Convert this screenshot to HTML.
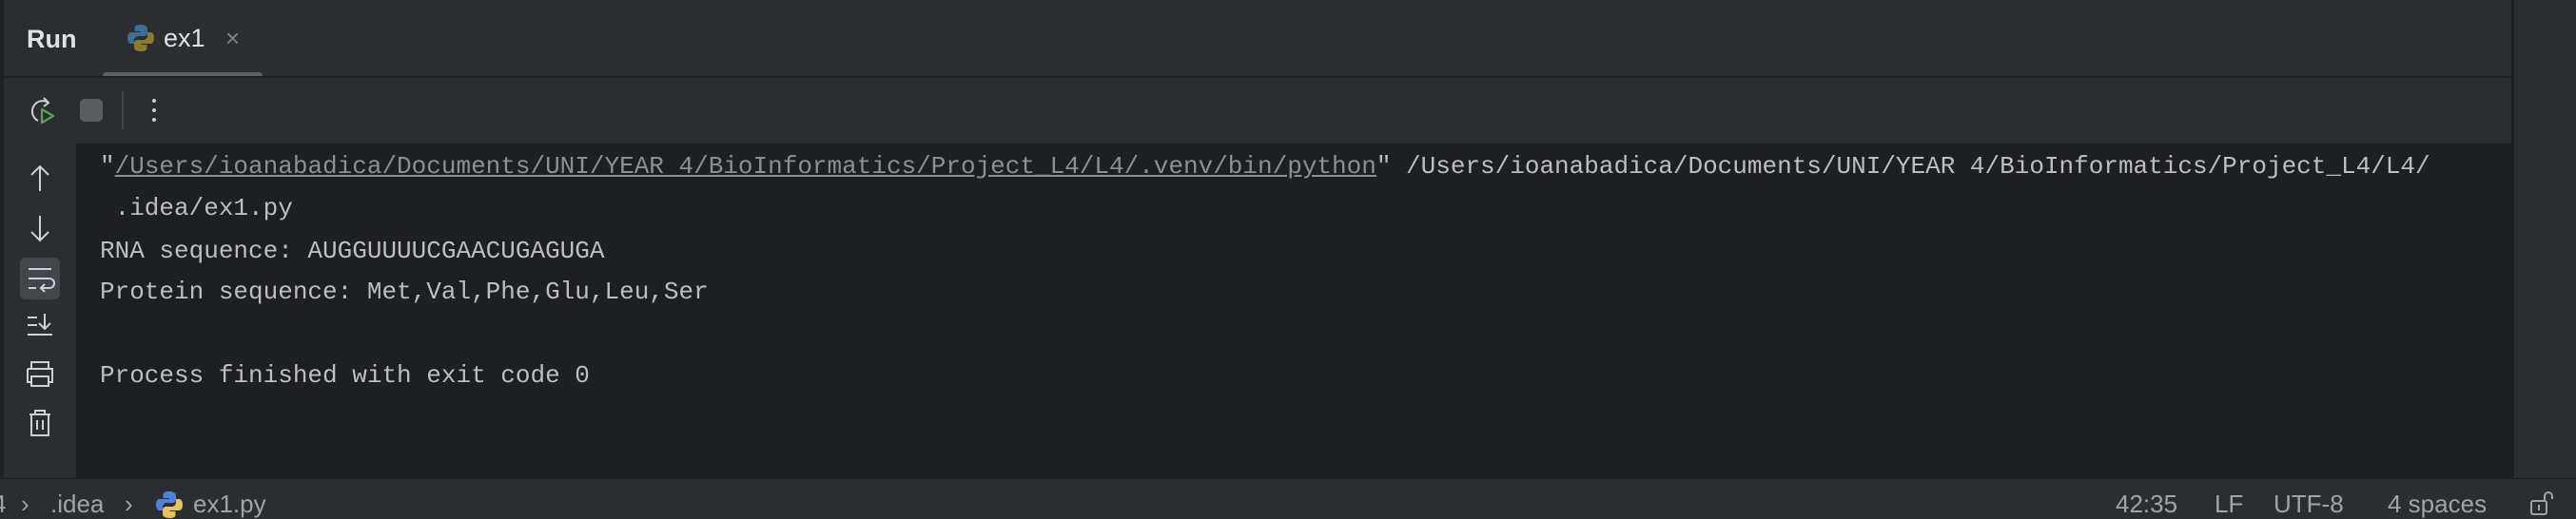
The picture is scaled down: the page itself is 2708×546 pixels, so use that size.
<!DOCTYPE html>
<html><head><meta charset="utf-8"><style>
*{margin:0;padding:0;box-sizing:border-box}
body{width:2708px;height:544px;background:#2b2d30;position:relative;overflow:hidden;font-family:"Liberation Sans",sans-serif}
.abs{position:absolute}
.mono{font-family:"Liberation Mono",monospace;font-size:26px;color:#bcbec4;white-space:pre;line-height:30px}
.sb{font-size:26px;color:#a0a3a9;line-height:30px;white-space:pre}
</style></head><body>
<div class="abs" style="left:0;top:0;width:4px;height:504px;background:#1e1f22"></div>
<div class="abs" style="left:2640px;top:0;width:3px;height:504px;background:#1e1f22"></div>
<!-- tab bar -->
<div class="abs" style="left:28px;top:24px;font-size:27px;font-weight:bold;color:#dfe1e5;line-height:34px">Run</div>
<svg class="abs" style="left:133px;top:25px" width="30" height="30" viewBox="0 0 30 30">
<path d="M14.5 1c-6 0-6 2.5-6 4v3h6v1H5C2 9 1 12 1 15s1 6 4 6h3v-3.5c0-2.5 2-4.5 4.5-4.5h6c2 0 3.5-1.5 3.5-3.5V5c0-2-2-4-7.5-4z" fill="#3e6e93"/>
<path d="M15.5 29c6 0 6-2.5 6-4v-3h-6v-1H25c3 0 4-3 4-6s-1-6-4-6h-3v3.5c0 2.5-2 4.5-4.5 4.5h-6C9.5 17 8 18.5 8 20.5V25c0 2 2 4 7.5 4z" fill="#8c7a2e"/>
</svg>
<div class="abs" style="left:172px;top:23px;font-size:27px;color:#dfe1e5;line-height:34px">ex1</div>
<div class="abs" style="left:237px;top:23px;font-size:26px;color:#7f8288;line-height:34px">×</div>
<div class="abs" style="left:108px;top:76px;width:168px;height:6px;border-radius:3px;background:#5a5d63"></div>
<div class="abs" style="left:4px;top:80px;width:2636px;height:2px;background:#1e1f22"></div>
<!-- toolbar -->
<svg class="abs" style="left:28px;top:100px" width="34" height="34" viewBox="0 0 34 34">
<path d="M23 8A11 11 0 1 0 12 27" fill="none" stroke="#ced0d6" stroke-width="2"/>
<path d="M18 3l5 5-5 4" fill="none" stroke="#ced0d6" stroke-width="2"/>
<path d="M16 15l12 7-12 7z" fill="none" stroke="#5fa05a" stroke-width="2.2" stroke-linejoin="round"/>
</svg>
<div class="abs" style="left:84px;top:104px;width:24px;height:24px;border-radius:5px;background:#5a5b5e"></div>
<div class="abs" style="left:128px;top:96px;width:2px;height:40px;background:#43454a"></div>
<div class="abs" style="left:160px;top:104px;width:4px;height:4px;border-radius:2px;background:#ced0d6"></div>
<div class="abs" style="left:160px;top:114px;width:4px;height:4px;border-radius:2px;background:#ced0d6"></div>
<div class="abs" style="left:160px;top:124px;width:4px;height:4px;border-radius:2px;background:#ced0d6"></div>
<!-- content -->
<div class="abs" style="left:80px;top:151px;width:2560px;height:353px;background:#1e1f22"></div>
<div class="abs" style="left:4px;top:151px;width:76px;height:353px;background:#2b2d30"></div>
<!-- gutter icons -->
<svg class="abs" style="left:4px;top:151px" width="76" height="320" viewBox="0 0 76 320" fill="none" stroke="#ced0d6" stroke-width="2">
<path d="M38 24v26M29 33l9-9 9 9"/>
<path d="M38 76v26M29 93l9 9 9-9"/>
<rect x="17" y="120" width="42" height="44" rx="6" fill="#43454a" stroke="none"/>
<path d="M26 132h24M26 142h22a5 5 0 0 1 0 10h-8M43 148l-4 4 4 4M26 152h8"/>
<path d="M25 183h10M25 191h10M25 201h26M43 179v16M37 189l6 6 6-6"/>
<path d="M29 237v-7h18v7M25 237h26v14h-4M29 251h-4v-14M29 245h18v10H29z"/>
<path d="M27 285h22M33 285v-4h10v4M29 285v22h18v-22M35 291v10M41 291v10"/>
</svg>
<div class="abs mono" style="left:105px;top:160px">"<span style="color:#8c8f95;text-decoration:underline">/Users/ioanabadica/Documents/UNI/YEAR 4/BioInformatics/Project_L4/L4/.venv/bin/python</span>" /Users/ioanabadica/Documents/UNI/YEAR 4/BioInformatics/Project_L4/L4/</div>
<div class="abs mono" style="left:105px;top:204px"> .idea/ex1.py</div>
<div class="abs mono" style="left:105px;top:249px">RNA sequence: AUGGUUUUCGAACUGAGUGA</div>
<div class="abs mono" style="left:105px;top:292px">Protein sequence: Met,Val,Phe,Glu,Leu,Ser</div>
<div class="abs mono" style="left:105px;top:380px">Process finished with exit code 0</div>
<!-- status bar -->
<div class="abs" style="left:0;top:503px;width:2708px;height:1px;background:#1e1f22"></div>
<div class="abs sb" style="left:-8px;top:515px">4</div>
<div class="abs sb" style="left:22px;top:515px">›</div>
<div class="abs sb" style="left:53px;top:515px">.idea</div>
<div class="abs sb" style="left:131px;top:515px">›</div>
<svg class="abs" style="left:163px;top:516px" width="30" height="30" viewBox="0 0 30 30">
<path d="M14.5 1c-6 0-6 2.5-6 4v3h6v1H5C2 9 1 12 1 15s1 6 4 6h3v-3.5c0-2.5 2-4.5 4.5-4.5h6c2 0 3.5-1.5 3.5-3.5V5c0-2-2-4-7.5-4z" fill="#4f82d8"/>
<path d="M15.5 29c6 0 6-2.5 6-4v-3h-6v-1H25c3 0 4-3 4-6s-1-6-4-6h-3v3.5c0 2.5-2 4.5-4.5 4.5h-6C9.5 17 8 18.5 8 20.5V25c0 2 2 4 7.5 4z" fill="#e8c25a"/>
</svg>
<div class="abs sb" style="left:203px;top:515px">ex1.py</div>
<div class="abs sb" style="left:2224px;top:515px">42:35</div>
<div class="abs sb" style="left:2328px;top:515px">LF</div>
<div class="abs sb" style="left:2390px;top:515px">UTF-8</div>
<div class="abs sb" style="left:2510px;top:515px">4 spaces</div>
<svg class="abs" style="left:2658px;top:514px" width="30" height="30" viewBox="0 0 30 30" fill="none" stroke="#a0a3a9" stroke-width="2">
<rect x="3" y="13" width="16" height="14" rx="2"/><path d="M11 17v6M17 13V8a4 4 0 0 1 8 0v3"/>
</svg>
</body></html>
